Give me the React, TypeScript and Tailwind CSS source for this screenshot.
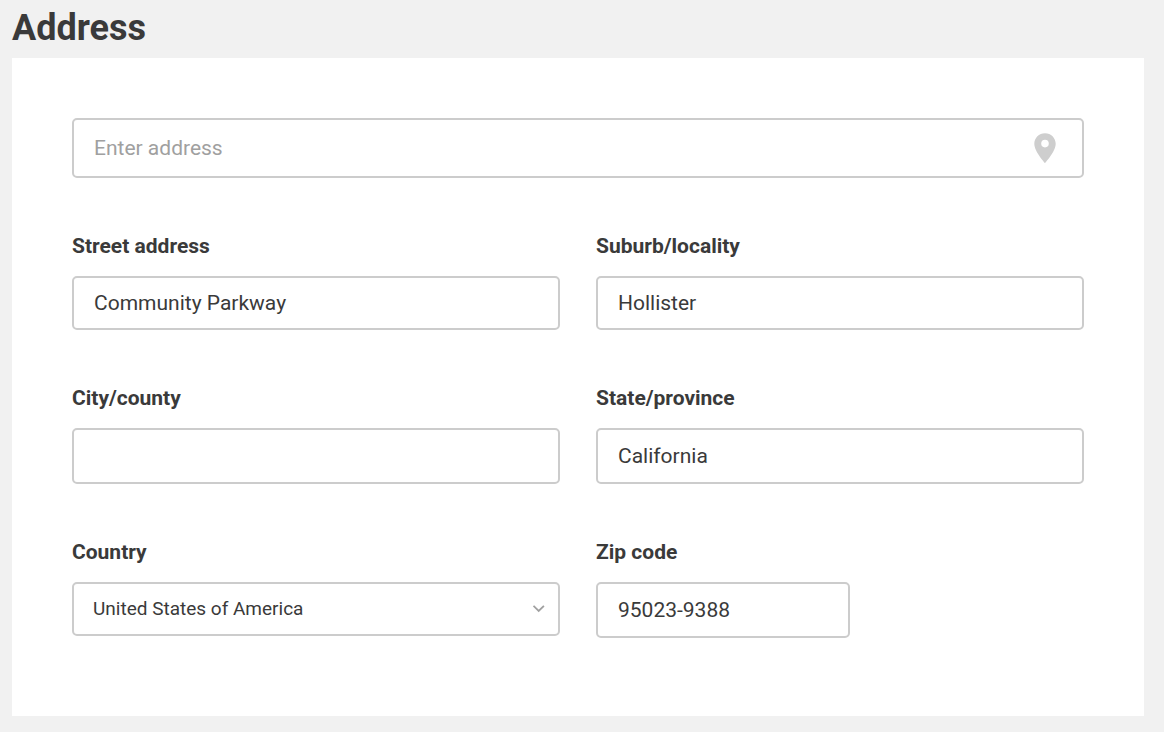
import { useState } from 'react';

const fieldClass =
  'block w-full rounded-[5px] border-2 border-[#cccccc] bg-white px-5 text-[21px] text-[#3a3a3a] outline-none focus:border-[#9a9a9a]';
const labelClass = 'mb-4 block text-[21px] leading-7 font-bold text-[#3a3a3a]';

type TextFieldProps = {
  id: string;
  label: string;
  value: string;
  onChange: (value: string) => void;
  className: string;
};

const TextField = ({ id, label, value, onChange, className }: TextFieldProps) => (
  <div>
    <label htmlFor={id} className={labelClass}>
      {label}
    </label>
    <input
      id={id}
      type="text"
      value={value}
      onChange={(e) => onChange(e.target.value)}
      className={`${fieldClass} ${className}`}
    />
  </div>
);

const PinIcon = () => (
  <svg viewBox="0 0 22 30" className="h-[30px] w-[22px]" fill="#cecece" aria-hidden="true">
    <path
      fillRule="evenodd"
      d="M11 0.2C5 0.2 0.3 4.9 0.3 10.7C0.3 18.4 11 30 11 30C11 30 21.7 18.4 21.7 10.7C21.7 4.9 17 0.2 11 0.2ZM11 14.4A3.8 3.8 0 1 1 11 6.8A3.8 3.8 0 0 1 11 14.4Z"
    />
  </svg>
);

const App = () => {
  const [search, setSearch] = useState('');
  const [address, setAddress] = useState({
    street: 'Community Parkway',
    suburb: 'Hollister',
    city: '',
    state: 'California',
    country: 'United States of America',
    zip: '95023-9388',
  });

  const update = (key: keyof typeof address) => (value: string) =>
    setAddress((prev) => ({ ...prev, [key]: value }));

  return (
    <main className="min-h-screen bg-[#f1f1f1] pr-5 pb-4 pl-3 font-[Roboto,sans-serif]">
      <h1 className="pt-1.5 pb-2 text-4xl leading-[44px] font-bold text-[#3a3a3a]">Address</h1>

      <form className="bg-white px-[60px] pt-[60px] pb-[78px]">
        {/* Address lookup */}
        <div className="relative">
          <input
            type="text"
            aria-label="Enter address"
            placeholder="Enter address"
            value={search}
            onChange={(e) => setSearch(e.target.value)}
            className={`${fieldClass} h-[60px] pr-16 placeholder:text-[#a0a0a0]`}
          />
          <span className="pointer-events-none absolute inset-y-0 right-7 flex items-center">
            <PinIcon />
          </span>
        </div>

        <div className="mt-[54px] grid grid-cols-2 gap-x-9 gap-y-[54px]">
          <TextField
            id="street"
            label="Street address"
            value={address.street}
            onChange={update('street')}
            className="h-[54px]"
          />
          <TextField
            id="suburb"
            label="Suburb/locality"
            value={address.suburb}
            onChange={update('suburb')}
            className="h-[54px]"
          />
          <TextField
            id="city"
            label="City/county"
            value={address.city}
            onChange={update('city')}
            className="h-14"
          />
          <TextField
            id="state"
            label="State/province"
            value={address.state}
            onChange={update('state')}
            className="h-14"
          />
          <div>
            <label htmlFor="country" className={labelClass}>
              Country
            </label>
            <div className="relative">
              <select
                id="country"
                value={address.country}
                onChange={(e) => update('country')(e.target.value)}
                className="block h-[54px] w-full appearance-none rounded-[5px] border-2 border-[#cccccc] bg-white px-[19px] text-[19px] text-[#3a3a3a] outline-none focus:border-[#9a9a9a]"
              >
                <option>United States of America</option>
                <option>Canada</option>
                <option>New Zealand</option>
              </select>
              <svg
                viewBox="0 0 12 8"
                className="pointer-events-none absolute top-[23px] right-[15px] h-2 w-3"
                fill="none"
                stroke="#a0a0a0"
                strokeWidth="1.8"
                aria-hidden="true"
              >
                <path d="M0.5 0.8L5.7 6L10.9 0.8" />
              </svg>
            </div>
          </div>
          <div className="w-[52%]">
            <TextField
              id="zip"
              label="Zip code"
              value={address.zip}
              onChange={update('zip')}
              className="h-14"
            />
          </div>
        </div>
      </form>
    </main>
  );
};

export default App;
